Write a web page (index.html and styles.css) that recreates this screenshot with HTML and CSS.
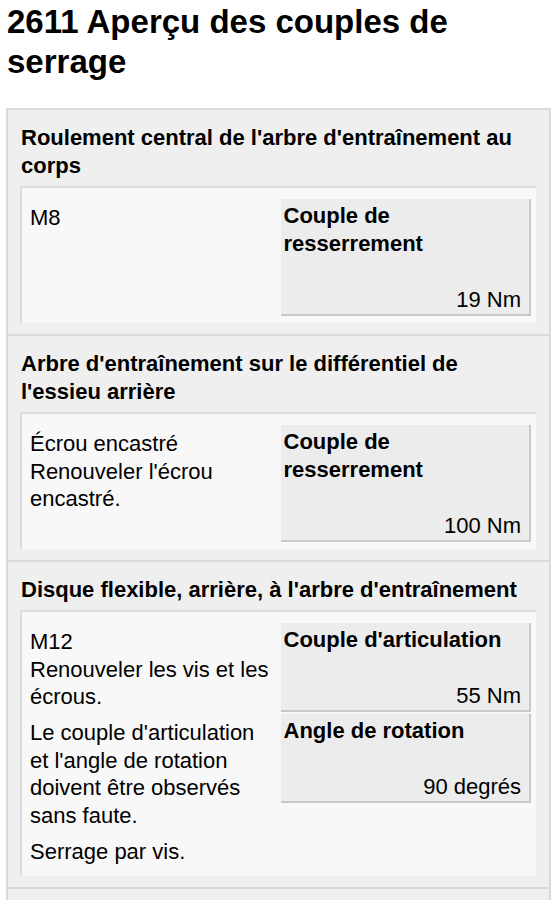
FILE: index.html
```html
<!DOCTYPE html>
<html lang="fr">
<head>
<meta charset="utf-8">
<title>2611 Aperçu des couples de serrage</title>
<link rel="stylesheet" href="styles.css">
</head>
<body>
<h1 class="title">2611 Aperçu des couples de serrage</h1>
<div class="sections">
  <section class="section">
    <h2 class="section-head">Roulement central de l'arbre d'entraînement au corps</h2>
    <div class="panel">
      <div class="notes">
        <p class="note">M8</p>
      </div>
      <div class="values">
        <div class="cell">
          <div class="cell-label">Couple de resserrement</div>
          <div class="cell-value">19 Nm</div>
        </div>
      </div>
    </div>
  </section>
  <section class="section">
    <h2 class="section-head">Arbre d'entraînement sur le différentiel de l'essieu arrière</h2>
    <div class="panel">
      <div class="notes">
        <p class="note">Écrou encastré<br>Renouveler l'écrou encastré.</p>
      </div>
      <div class="values">
        <div class="cell">
          <div class="cell-label">Couple de resserrement</div>
          <div class="cell-value">100 Nm</div>
        </div>
      </div>
    </div>
  </section>
  <section class="section">
    <h2 class="section-head">Disque flexible, arrière, à l'arbre d'entraînement</h2>
    <div class="panel">
      <div class="notes">
        <p class="note">M12<br>Renouveler les vis et les écrous.</p>
        <p class="note">Le couple d'articulation et l'angle de rotation doivent être observés sans faute.</p>
        <p class="note">Serrage par vis.</p>
      </div>
      <div class="values">
        <div class="cell">
          <div class="cell-label">Couple d'articulation</div>
          <div class="cell-value">55 Nm</div>
        </div>
        <div class="cell">
          <div class="cell-label">Angle de rotation</div>
          <div class="cell-value">90 degrés</div>
        </div>
      </div>
    </div>
  </section>
  <section class="section">
    <h2 class="section-head">&nbsp;</h2>
  </section>
</div>
</body>
</html>
```
FILE: styles.css
```css
* { box-sizing: border-box; }
html, body {
  margin: 0;
  padding: 0;
  background: #ffffff;
  color: #000000;
  font-family: "Liberation Sans", Arial, Helvetica, sans-serif;
}
.title {
  margin: 0 0 26px 0;
  padding: 2px 8px 0 7px;
  font-size: 33px;
  line-height: 40px;
  font-weight: bold;
}
.sections {
  margin: 0 6px;
  border-left: 2px solid #dadada;
  border-right: 2px solid #dadada;
  background: #efefef;
}
.section {
  border-top: 2px solid #dadada;
  padding: 14px 13px 11px 12px;
}
.section-head {
  margin: 0 0 6px 1px;
  font-size: 22px;
  line-height: 28px;
  font-weight: bold;
}
.panel {
  display: grid;
  grid-template-columns: 1fr 1fr;
  background: #f8f8f8;
  border-top: 2px solid #dcdcdc;
  border-left: 2px solid #dcdcdc;
  padding: 11px 5px 7px 8px;
}
.notes {
  padding: 5px 6px 3px 0;
}
.note {
  margin: 0 0 8.5px 0;
  font-size: 22px;
  line-height: 27.6px;
}
.note:last-child { margin-bottom: 0; }
.values {
  display: flex;
  flex-direction: column;
  gap: 2px;
  align-self: start;
}
.cell {
  background: #ececec;
  border-right: 2px solid #c9c9c9;
  border-bottom: 2px solid #c9c9c9;
  padding: 3px 8px 0 3px;
  font-size: 22px;
  line-height: 28px;
}
.cell-label {
  font-weight: bold;
}
.cell-value {
  margin-top: 28px;
  text-align: right;
}
```
